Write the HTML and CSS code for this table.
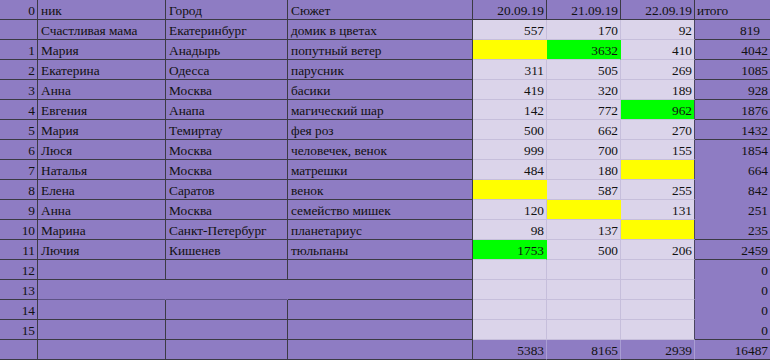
FILE: index.html
```html
<!DOCTYPE html>
<html lang="ru">
<head>
<meta charset="utf-8">
<title>Таблица</title>
<link rel="stylesheet" href="styles.css">
</head>
<body>
<div class="sheet">
  <div class="c n">0</div><div class="c">ник</div><div class="c">Город</div><div class="c">Сюжет</div><div class="c n">20.09.19</div><div class="c n">21.09.19</div><div class="c n">22.09.19</div><div class="c t">итого</div>

  <div class="c n"></div><div class="c">Счастливая мама</div><div class="c">Екатеринбург</div><div class="c">домик в цветах</div><div class="c n lt">557</div><div class="c n lt">170</div><div class="c n lt e">92</div><div class="c n t w">819</div>

  <div class="c n">1</div><div class="c">Мария</div><div class="c">Анадырь</div><div class="c">попутный ветер</div><div class="c n y"></div><div class="c n g">3632</div><div class="c n lt e">410</div><div class="c n t">4042</div>

  <div class="c n">2</div><div class="c">Екатерина</div><div class="c">Одесса</div><div class="c">парусник</div><div class="c n lt">311</div><div class="c n lt">505</div><div class="c n lt e">269</div><div class="c n t">1085</div>

  <div class="c n">3</div><div class="c">Анна</div><div class="c">Москва</div><div class="c">басики</div><div class="c n lt">419</div><div class="c n lt">320</div><div class="c n lt e">189</div><div class="c n t">928</div>

  <div class="c n">4</div><div class="c">Евгения</div><div class="c">Анапа</div><div class="c">магический шар</div><div class="c n lt">142</div><div class="c n lt">772</div><div class="c n g e">962</div><div class="c n t">1876</div>

  <div class="c n">5</div><div class="c">Мария</div><div class="c">Темиртау</div><div class="c">фея роз</div><div class="c n lt">500</div><div class="c n lt">662</div><div class="c n lt e">270</div><div class="c n t">1432</div>

  <div class="c n">6</div><div class="c">Люся</div><div class="c">Москва</div><div class="c">человечек, венок</div><div class="c n lt">999</div><div class="c n lt">700</div><div class="c n lt e">155</div><div class="c n t nb">1854</div>

  <div class="c n">7</div><div class="c">Наталья</div><div class="c">Москва</div><div class="c">матрешки</div><div class="c n lt">484</div><div class="c n lt">180</div><div class="c n y e"></div><div class="c n t nb">664</div>

  <div class="c n">8</div><div class="c">Елена</div><div class="c">Саратов</div><div class="c">венок</div><div class="c n y"></div><div class="c n lt">587</div><div class="c n lt e">255</div><div class="c n t nb">842</div>

  <div class="c n">9</div><div class="c">Анна</div><div class="c">Москва</div><div class="c">семейство мишек</div><div class="c n lt">120</div><div class="c n y"></div><div class="c n lt e">131</div><div class="c n t nb">251</div>

  <div class="c n">10</div><div class="c">Марина</div><div class="c">Санкт-Петербург</div><div class="c">планетариус</div><div class="c n lt">98</div><div class="c n lt">137</div><div class="c n y e"></div><div class="c n t">235</div>

  <div class="c n">11</div><div class="c">Лючия</div><div class="c">Кишенев</div><div class="c">тюльпаны</div><div class="c n g">1753</div><div class="c n lt">500</div><div class="c n lt e">206</div><div class="c n t">2459</div>

  <div class="c n">12</div><div class="c"></div><div class="c"></div><div class="c"></div><div class="c lt"></div><div class="c lt"></div><div class="c lt e"></div><div class="c n t nb">0</div>

  <div class="c n">13</div><div class="c nr fb"></div><div class="c nr fb"></div><div class="c"></div><div class="c lt"></div><div class="c lt"></div><div class="c lt e"></div><div class="c n t nb">0</div>

  <div class="c n">14</div><div class="c"></div><div class="c"></div><div class="c"></div><div class="c lt"></div><div class="c lt"></div><div class="c lt e"></div><div class="c n t nb">0</div>

  <div class="c n">15</div><div class="c"></div><div class="c"></div><div class="c"></div><div class="c lt"></div><div class="c lt"></div><div class="c lt e"></div><div class="c n t">0</div>

  <div class="c n"></div><div class="c"></div><div class="c"></div><div class="c"></div><div class="c n sum">5383</div><div class="c n sum">8165</div><div class="c n sum">2939</div><div class="c n t">16487</div>
</div>
</body>
</html>
```
FILE: styles.css
```css
html, body {
  margin: 0;
  padding: 0;
  background: #8e7cc3;
}

.sheet {
  display: grid;
  grid-template-columns: 38px 128px 122px 185px 74px 74px 74px 75px;
  grid-auto-rows: 20px;
  width: 770px;
  font-family: "Liberation Serif", "Times New Roman", serif;
  font-size: 13.33px;
  color: #111;
}

.c {
  box-sizing: border-box;
  display: flex;
  align-items: flex-end;
  justify-content: flex-start;
  padding: 0 3px 1px 3px;
  line-height: 15px;
  white-space: nowrap;
  background: #8e7cc3;
  border-right: 1px solid #3b3a44;
  border-bottom: 1px solid #3b3a44;
}

.n {
  justify-content: flex-end;
  padding-right: 2px;
}

.t {
  padding-left: 2px;
  border-right: none;
}

.w {
  padding-right: 10px;
}

.nb {
  border-bottom-color: #8e7cc3;
}

.nr {
  border-right-color: #8e7cc3;
}

.fb {
  border-bottom-color: #5e5385;
}

.lt {
  background: #dbd4ea;
  border-right-color: #c6bedb;
  border-bottom-color: #c6bedb;
}

.y {
  background: #ffff00;
  border-right-color: #ffff00;
  border-bottom-color: #c6bedb;
}

.g {
  background: #00ff00;
  border-right-color: #00ff00;
  border-bottom-color: #c6bedb;
}

.e {
  border-right-color: #4a4560;
}

.sum {
  border-right-color: #a89dd3;
}
```
